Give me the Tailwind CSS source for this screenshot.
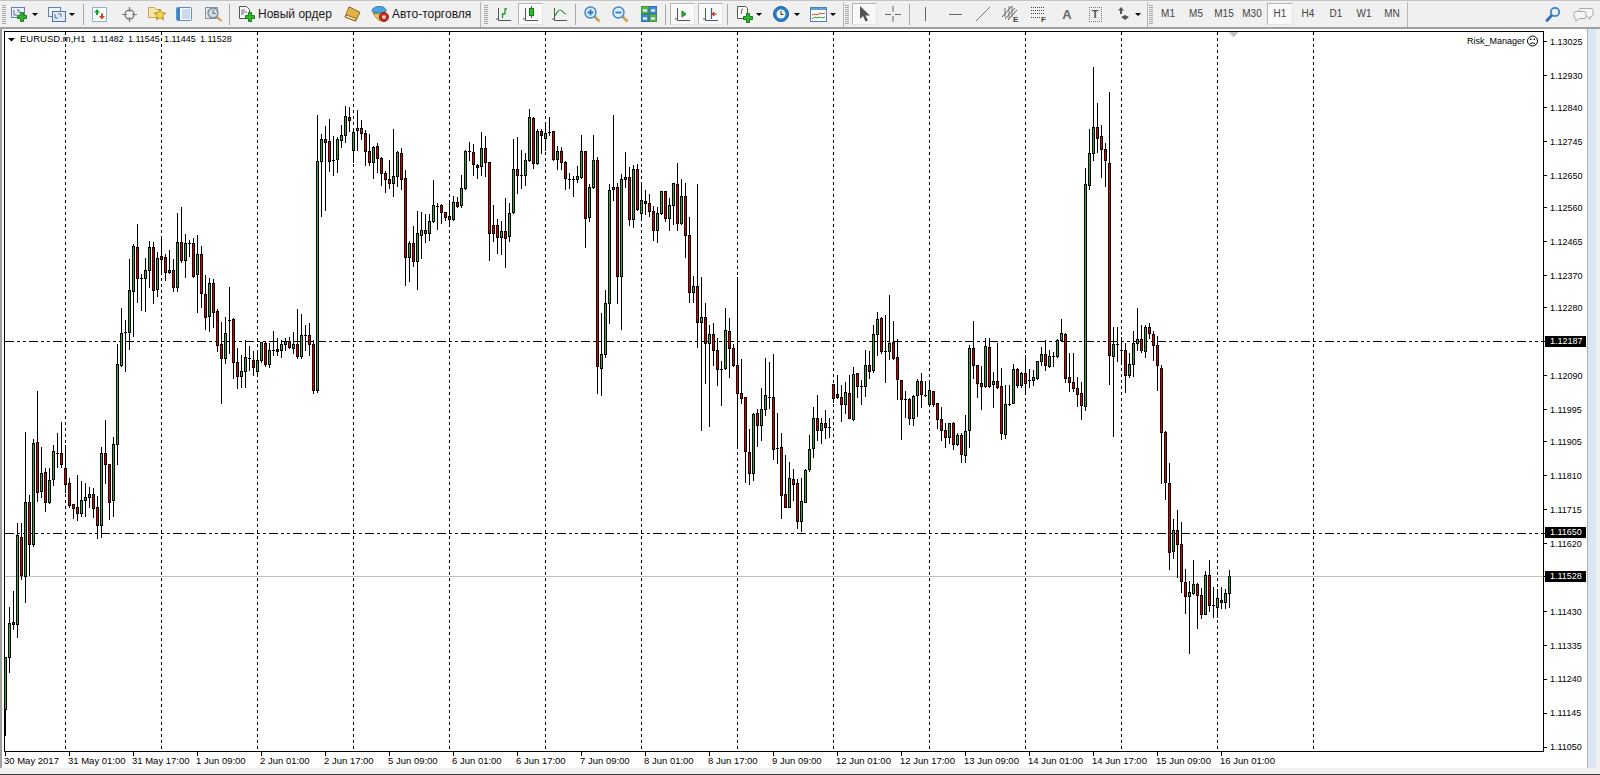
<!DOCTYPE html>
<html lang="ru">
<head>
<meta charset="utf-8">
<title>EURUSD.m,H1</title>
<script src="https://cdn.jsdelivr.net/npm/@tailwindcss/browser@4"></script>
</head>
<body class="w-[1600px] h-[775px] overflow-hidden bg-[#f0f0f0] font-['Liberation_Sans',sans-serif] text-black">

<header class="relative z-10 flex items-center w-[1600px] h-[28px] bg-[#f0f0f0] border-t border-t-[#c4c4c4] border-b border-b-[#a0a0a0] shadow-[0_1px_0_#a0a0a0]">
  <!-- group 1 -->
  <div class="flex-none w-[8px] h-full flex items-center justify-center"><div class="w-[4px] h-[20px] bg-[repeating-linear-gradient(0deg,#a8a8a8_0,#a8a8a8_1px,transparent_1px,transparent_2px)]"></div></div>
  <div class="flex-none w-[34px] h-full flex items-center pl-[3px] gap-[3px]">
    <svg width="18" height="15" viewBox="0 0 18 15"><rect x=".5" y=".5" width="13" height="10" fill="#e8f1fb" stroke="#5f83ad"/><path d="M3 3v5h3M6 3h2v3" stroke="#52708f" fill="none"/><path d="M9.500 5.500h3v3h3v3h-3v3h-3v-3h-3v-3h3z" fill="#2db52d" stroke="#1a7f1a"/></svg>
    <div class="w-0 h-0 border-x-[3px] border-x-transparent border-t-[3px] border-t-black"></div>
  </div>
  <div class="flex-none w-[36px] h-full flex items-center pl-[6px] gap-[3px]">
    <svg width="18" height="15" viewBox="0 0 18 15"><rect x=".5" y=".5" width="12" height="9" fill="#eef4fb" stroke="#5f83ad"/><rect x="4.500" y="4.500" width="13" height="10" fill="#dfeafa" stroke="#4a76aa"/><path d="M7 7v4h3M10 7h3v3" stroke="#52708f" fill="none"/></svg>
    <div class="w-0 h-0 border-x-[3px] border-x-transparent border-t-[3px] border-t-black"></div>
  </div>
  <div class="flex-none w-[5px]"></div>
  <div class="flex-none w-px h-[21px] bg-[#a8a8a8]"></div>
  <div class="flex-none w-[31px] h-full flex items-center justify-center">
    <svg width="15" height="15" viewBox="0 0 15 15"><rect x=".5" y=".5" width="14" height="14" fill="#fff" stroke="#8fb0d8"/><path d="M2 5.500l3-3.500 3 3.500H6V8H4V5.500z" fill="#22a022"/><path d="M7 9h2V6.500h2V9h2l-3 3.500z" fill="#d8431f"/></svg>
  </div>
  <div class="flex-none w-[29px] h-full flex items-center justify-center">
    <svg width="15" height="15" viewBox="0 0 15 15" fill="none" stroke="#7d7d7d"><circle cx="7.500" cy="7.500" r="4.500" stroke-width="1.400"/><path d="M7.500 0v5M7.500 10v5M0 7.500h5M10 7.500h5" stroke-width="1.200"/></svg>
  </div>
  <div class="flex-none w-[26px] h-full flex items-center justify-center">
    <svg width="18" height="16" viewBox="0 0 18 16"><path d="M.5 1.500h6l1.500 2h4v8H.5z" fill="#f7e6a8" stroke="#c2a658"/><path d="M12 3l1.700 3.700 4 .4-3 2.700.9 4-3.600-2.100L8.400 13.800l.9-4-3-2.700 4-.4z" fill="#f8d648" stroke="#a98a2a"/></svg>
  </div>
  <div class="flex-none w-[28px] h-full flex items-center justify-center">
    <svg width="16" height="14" viewBox="0 0 16 14"><rect x=".5" y=".5" width="15" height="13" rx="1" fill="#f4f8fd" stroke="#5f8fc6"/><rect x="1" y="1" width="3" height="12" fill="#3d82cc"/><path d="M6 3h8M6 5h8M6 7h8M6 9h8M6 11h8" stroke="#9dbbdd"/></svg>
  </div>
  <div class="flex-none w-[31px] h-full flex items-center justify-center">
    <svg width="18" height="16" viewBox="0 0 18 16"><rect x=".5" y="1.500" width="12" height="11" fill="#e3e8ee" stroke="#8a949e"/><circle cx="8" cy="7" r="5" fill="#cfdde9" stroke="#7a8794" stroke-width="1.300"/><path d="M8 4v3.500h2.500" stroke="#5f6a75" fill="none"/><path d="M12 11l4.500 4" stroke="#c8a14b" stroke-width="2.200"/></svg>
  </div>
  <div class="flex-none w-px h-[21px] bg-[#a8a8a8]"></div>
  <div class="flex-none w-[110px] h-full flex items-center pl-[9px] gap-[3px] text-[12px] leading-none text-[#1a1a1a]">
    <svg width="16" height="16" viewBox="0 0 16 16" class="flex-none"><path d="M.5.500h7l3 3v9H.5z" fill="#fff" stroke="#555"/><path d="M2 4h4M2 6h6M2 8h3" stroke="#666"/><path d="M9.500 6.500h3v3h3v3h-3v3h-3v-3h-3v-3h3z" fill="#2db52d" stroke="#1a7f1a"/></svg>
    <span class="whitespace-nowrap">Новый ордер</span>
  </div>
  <div class="flex-none w-[25px] h-full flex items-center justify-center">
    <svg width="17" height="16" viewBox="0 0 17 16"><path d="M5 .8l11 5.500-4.500 8.700L1 11z" fill="#e6b246" stroke="#8a6a22"/><path d="M1 11l10.500 4 .8-2.500L2.500 9z" fill="#f6e7bb" stroke="#8a6a22"/></svg>
  </div>
  <div class="flex-none w-[115px] h-full flex items-center pl-[6px] gap-[3px] text-[12px] leading-none text-[#1a1a1a]">
    <svg width="18" height="16" viewBox="0 0 18 16" class="flex-none"><path d="M2 7c2 4 5 7 8 8l5-6-7-1z" fill="#e9c25a" stroke="#a98a2a"/><path d="M1 5c0-3 4-4.500 7.500-4.500S15 2 15 5c0 1-3 2-7 2S1 6 1 5z" fill="#4da3dc" stroke="#2c77ad"/><circle cx="13" cy="11" r="4.500" fill="#d82a1c" stroke="#8f1a10"/><rect x="11.500" y="9.500" width="3" height="3" fill="#fff"/></svg>
    <span class="whitespace-nowrap">Авто-торговля</span>
  </div>
  <div class="flex-none w-px h-[25px] bg-[#b8b8b8]"></div>

  <!-- group 2 -->
  <div class="flex-none w-[10px] h-full flex items-center justify-center"><div class="w-[4px] h-[20px] bg-[repeating-linear-gradient(0deg,#a8a8a8_0,#a8a8a8_1px,transparent_1px,transparent_2px)]"></div></div>
  <div class="flex-none w-[25px] h-full flex items-center justify-center">
    <svg width="15" height="15" viewBox="0 0 15 15" fill="none"><path d="M2.500 1v12.500H15M0 12h3" stroke="#555"/><path d="M6.500 11V7H9M9 7V2h2" stroke="#1a961a" stroke-width="1.300"/></svg>
  </div>
  <div class="flex-none ml-[2px] w-[25px] h-[22px] flex items-center justify-center bg-[#f9f9f9] border border-t-[#b4b4b4] border-l-[#b4b4b4] border-r-[#e4e4e4] border-b-[#e4e4e4]">
    <svg width="15" height="16" viewBox="0 0 15 16" fill="none"><path d="M2.500 2v12.500H15M0 13h3" stroke="#555"/><path d="M8.500 0v12" stroke="#157a15"/><rect x="6.500" y="2.500" width="4" height="7" fill="#2dbb2d" stroke="#157a15"/></svg>
  </div>
  <div class="flex-none w-[32px] h-full flex items-center justify-center">
    <svg width="15" height="15" viewBox="0 0 15 15" fill="none"><path d="M2.500 1v12.500H15M0 12h3" stroke="#555"/><path d="M3 9c2-4 3-6 5-6s3 3 6 4" stroke="#1a961a" stroke-width="1.200"/></svg>
  </div>
  <div class="flex-none w-px h-[21px] bg-[#a8a8a8]"></div>
  <div class="flex-none w-[32px] h-full flex items-center justify-center">
    <svg width="17" height="17" viewBox="0 0 17 17" fill="none"><path d="M10.500 10.500l5 5" stroke="#c9a24d" stroke-width="2.600"/><circle cx="6.500" cy="6.500" r="5.500" fill="#d9ecfa" stroke="#3f86c6" stroke-width="1.400"/><path d="M6.500 3.500v6M3.500 6.500h6" stroke="#2b7cc4" stroke-width="1.800"/></svg>
  </div>
  <div class="flex-none w-[24px] h-full flex items-center justify-center">
    <svg width="17" height="17" viewBox="0 0 17 17" fill="none"><path d="M10.500 10.500l5 5" stroke="#c9a24d" stroke-width="2.600"/><circle cx="6.500" cy="6.500" r="5.500" fill="#d9ecfa" stroke="#3f86c6" stroke-width="1.400"/><path d="M3.500 6.500h6" stroke="#2b7cc4" stroke-width="1.800"/></svg>
  </div>
  <div class="flex-none w-[33px] h-full flex items-center justify-center">
    <svg width="16" height="16" viewBox="0 0 16 16"><rect width="16" height="16" fill="#fff"/><rect x=".5" y=".5" width="7" height="7" fill="#57b557" stroke="#3f9a3f"/><rect x="8.500" y=".5" width="7" height="7" fill="#3f8ad6" stroke="#2f72b8"/><rect x=".5" y="8.500" width="7" height="7" fill="#3f8ad6" stroke="#2f72b8"/><rect x="8.500" y="8.500" width="7" height="7" fill="#57b557" stroke="#3f9a3f"/><path d="M2 4.500h4M10 4.500h4M2 12.500h4M10 12.500h4" stroke="#fff" stroke-width="2"/></svg>
  </div>
  <div class="flex-none w-px h-[21px] bg-[#a8a8a8]"></div>
  <div class="flex-none ml-[4px] w-[25px] h-[22px] flex items-center justify-center bg-[#f9f9f9] border border-t-[#b4b4b4] border-l-[#b4b4b4] border-r-[#e4e4e4] border-b-[#e4e4e4]">
    <svg width="15" height="15" viewBox="0 0 15 15" fill="none"><path d="M2.500 1v12.500H15M0 12h3" stroke="#555"/><path d="M7 4l4 3-4 3z" fill="#31b531" stroke="#1a7f1a"/></svg>
  </div>
  <div class="flex-none ml-[3px] w-[25px] h-[22px] flex items-center justify-center bg-[#f9f9f9] border border-t-[#b4b4b4] border-l-[#b4b4b4] border-r-[#e4e4e4] border-b-[#e4e4e4]">
    <svg width="15" height="15" viewBox="0 0 15 15" fill="none"><path d="M2.500 1v12.500H15M0 12h3" stroke="#555"/><path d="M8.500 1v11" stroke="#2a5f9f" stroke-width="1.200"/><path d="M14 7H11V5L9 7l2 2V7" fill="#d8431f" stroke="#c83a18"/></svg>
  </div>
  <div class="flex-none ml-[4px] w-px h-[21px] bg-[#a8a8a8]"></div>
  <div class="flex-none w-[38px] h-full flex items-center pl-[9px] gap-[3px]">
    <svg width="16" height="17" viewBox="0 0 16 17" class="flex-none"><path d="M.5.500h8l2 2v10H.5z" fill="#fff" stroke="#555"/><path d="M6 3c-2 0-1 3-2 5" stroke="#555" fill="none"/><path d="M9.500 7.500h3v3h3v3h-3v3h-3v-3h-3v-3h3z" fill="#2db52d" stroke="#1a7f1a"/></svg>
    <div class="w-0 h-0 border-x-[3px] border-x-transparent border-t-[3px] border-t-black"></div>
  </div>
  <div class="flex-none w-[38px] h-full flex items-center pl-[7px] gap-[5px]">
    <svg width="16" height="16" viewBox="0 0 16 16" class="flex-none" fill="none"><circle cx="8" cy="8" r="7.500" fill="#2b7fc9" stroke="#1a5d99"/><circle cx="8" cy="8" r="4.500" fill="#f2f5f8"/><path d="M8 5v3.500h2.500" stroke="#333"/></svg>
    <div class="w-0 h-0 border-x-[3px] border-x-transparent border-t-[3px] border-t-black"></div>
  </div>
  <div class="flex-none w-[37px] h-full flex items-center pl-[6px] gap-[3px]">
    <svg width="17" height="15" viewBox="0 0 17 15" class="flex-none" fill="none"><rect x=".5" y=".5" width="16" height="14" fill="#fff" stroke="#4a7fb8"/><rect x="1" y="1" width="15" height="2" fill="#5f9bd8"/><path d="M2 8l3-1 2 1 3-2 2 1 3-1" stroke="#c8431f"/><path d="M2 12l3-2 2 1 3-1 2 1 3-1" stroke="#2ca02c"/></svg>
    <div class="w-0 h-0 border-x-[3px] border-x-transparent border-t-[3px] border-t-black"></div>
  </div>
  <div class="flex-none ml-[2px] w-px h-[25px] bg-[#b8b8b8]"></div>

  <!-- group 3 -->
  <div class="flex-none w-[6px] h-full flex items-center justify-center"><div class="w-[4px] h-[20px] bg-[repeating-linear-gradient(0deg,#a8a8a8_0,#a8a8a8_1px,transparent_1px,transparent_2px)]"></div></div>
  <div class="flex-none ml-[2px] w-[25px] h-[22px] flex items-center justify-center bg-[#f9f9f9] border border-t-[#b4b4b4] border-l-[#b4b4b4] border-r-[#e4e4e4] border-b-[#e4e4e4]">
    <svg width="11" height="16" viewBox="0 0 11 16"><path d="M1 0v13l3-3 2.500 5.500 2.500-1L6.500 9.500H11z" fill="#555"/></svg>
  </div>
  <div class="flex-none w-[32px] h-full flex items-center justify-center">
    <svg width="16" height="16" viewBox="0 0 16 16" stroke="#666"><path d="M8 0v6M8 10v6M0 8.500h6M10 8.500h6"/></svg>
  </div>
  <div class="flex-none w-px h-[21px] bg-[#a8a8a8]"></div>
  <div class="flex-none w-[31px] h-full flex items-center justify-center">
    <svg width="3" height="14" viewBox="0 0 3 14" stroke="#666"><path d="M1.500 0v14"/></svg>
  </div>
  <div class="flex-none w-[28px] h-full flex items-center justify-center">
    <svg width="13" height="3" viewBox="0 0 13 3" stroke="#666"><path d="M0 1.500h13"/></svg>
  </div>
  <div class="flex-none w-[27px] h-full flex items-center justify-center">
    <svg width="14" height="14" viewBox="0 0 14 14" stroke="#777"><path d="M0 14L14 0"/></svg>
  </div>
  <div class="flex-none w-[29px] h-full flex items-center justify-center">
    <svg width="17" height="18" viewBox="0 0 17 18" fill="none" stroke="#555"><path d="M0 12L10 1M3 14L13 3M6 15L15 5" /><path d="M3 3v9M7 1v12M10 1v11" stroke="#777"/><text x="11" y="17" font-size="8" font-weight="bold" fill="#444" stroke="none">E</text></svg>
  </div>
  <div class="flex-none w-[27px] h-full flex items-center justify-center">
    <svg width="16" height="17" viewBox="0 0 16 17" fill="none" stroke="#444" stroke-dasharray="1 1"><path d="M0 1.500h13M0 4.500h13M0 7.500h13M0 11.500h9"/><text x="10" y="16" font-size="8" font-weight="bold" fill="#444" stroke="none" stroke-dasharray="0">F</text></svg>
  </div>
  <div class="flex-none w-[30px] h-full flex items-center justify-center text-[13px] leading-none font-bold text-[#666]">A</div>
  <div class="flex-none w-[26px] h-full flex items-center justify-center">
    <div class="w-[13px] h-[15px] border border-dotted border-[#777] flex items-center justify-center text-[11px] leading-none font-bold text-[#555]">T</div>
  </div>
  <div class="flex-none w-[38px] h-full flex items-center pl-[9px] gap-[5px]">
    <svg width="13" height="15" viewBox="0 0 13 15" class="flex-none"><path d="M4 0l3 3.500H5V7H3V3.500H1z" fill="#555"/><path d="M1 9l4-2 4 2-4 3z" transform="translate(3 1)" fill="#555"/></svg>
    <div class="w-0 h-0 border-x-[3px] border-x-transparent border-t-[3px] border-t-black"></div>
  </div>
  <div class="flex-none ml-px w-px h-[25px] bg-[#b8b8b8]"></div>

  <!-- timeframes -->
  <div class="flex-none w-[6px] h-full flex items-center justify-center"><div class="w-[4px] h-[20px] bg-[repeating-linear-gradient(0deg,#a8a8a8_0,#a8a8a8_1px,transparent_1px,transparent_2px)]"></div></div>
  <div class="flex-none w-[28px] text-center text-[10px] leading-none text-[#444]">M1</div>
  <div class="flex-none w-[28px] text-center text-[10px] leading-none text-[#444]">M5</div>
  <div class="flex-none w-[28px] text-center text-[10px] leading-none text-[#444]">M15</div>
  <div class="flex-none w-[28px] text-center text-[10px] leading-none text-[#444]">M30</div>
  <div class="flex-none w-[28px] h-[22px] flex items-center justify-center px-px"><div class="w-[26px] h-[22px] flex items-center justify-center bg-[#f9f9f9] border border-t-[#b4b4b4] border-l-[#b4b4b4] border-r-[#e4e4e4] border-b-[#e4e4e4] text-[10px] leading-none text-[#444]">H1</div></div>
  <div class="flex-none w-[28px] text-center text-[10px] leading-none text-[#444]">H4</div>
  <div class="flex-none w-[28px] text-center text-[10px] leading-none text-[#444]">D1</div>
  <div class="flex-none w-[28px] text-center text-[10px] leading-none text-[#444]">W1</div>
  <div class="flex-none w-[28px] text-center text-[10px] leading-none text-[#444]">MN</div>
  <div class="flex-none ml-px w-px h-[25px] bg-[#b8b8b8]"></div>

  <div class="flex-1"></div>
  <div class="flex-none w-[30px] h-full flex items-center justify-center">
    <svg width="16" height="16" viewBox="0 0 16 16" fill="none"><path d="M7 9l-5 5.500" stroke="#2e6fc2" stroke-width="2.800" stroke-linecap="round"/><circle cx="10" cy="6" r="4.200" fill="#eaf3fc" stroke="#3a7fd0" stroke-width="1.800"/></svg>
  </div>
  <div class="flex-none w-[30px] h-full flex items-center justify-center mr-[2px]">
    <svg width="21" height="17" viewBox="0 0 21 17" fill="#f6f6f6" stroke="#a8a8a8"><path d="M8 2.500h10a2 2 0 012 2v4a2 2 0 01-2 2h-1v3l-3-3H8a2 2 0 01-2-2v-4a2 2 0 012-2z"/><path d="M3 5.500h8a2 2 0 012 2v3a2 2 0 01-2 2H6l-3 3v-3a2 2 0 01-2-2v-3a2 2 0 012-2z"/></svg>
  </div>
</header>

<main class="flex flex-col h-[747px]">
  <div class="flex h-[740px]">
    <div class="flex-none w-[2px] bg-[#a0a0a0]"></div>
    <section class="relative flex-none w-[1585px] h-[740px] bg-white overflow-hidden text-[9px] leading-[10px]">
      <svg id="chart" class="absolute left-0 top-0 block" width="1585" height="740" viewBox="2 28 1585 740" xmlns="http://www.w3.org/2000/svg">
        <g id="grid" shape-rendering="crispEdges"></g>
        <g id="bars" shape-rendering="crispEdges"></g>
        <rect x="4.500" y="31.500" width="1539" height="720" fill="none" stroke="#000" shape-rendering="crispEdges"/>
        <path d="M8 38h7l-3.500 3.500z" fill="#000"/>
        <path d="M1228.500 32h10l-5 5.500z" fill="#c4c4c4"/>
        <g fill="none" stroke="#000"><circle cx="1532.500" cy="41" r="5"/><path d="M1530 44c1.500-1.500 3.500-1.500 5 0"/></g>
        <rect x="1530" y="38.500" width="1.500" height="1.500" fill="#000"/><rect x="1533.500" y="38.500" width="1.500" height="1.500" fill="#000"/>
      </svg>

      <div class="absolute left-[18px] top-[6px] flex text-[9.500px] whitespace-nowrap">
        <span class="w-[72px]">EURUSD.m,H1</span>
        <span class="w-[36px] text-[9px]">1.11482</span>
        <span class="w-[36px] text-[9px]">1.11545</span>
        <span class="w-[36px] text-[9px]">1.11445</span>
        <span class="w-[36px] text-[9px]">1.11528</span>
      </div>
      <span class="absolute left-[1465px] top-[8px]">Risk_Manager</span>

      <!-- price axis -->
      <span class="absolute left-[1548px] top-[9px]">1.13025</span>
      <span class="absolute left-[1548px] top-[43px]">1.12930</span>
      <span class="absolute left-[1548px] top-[75px]">1.12840</span>
      <span class="absolute left-[1548px] top-[109px]">1.12745</span>
      <span class="absolute left-[1548px] top-[143px]">1.12650</span>
      <span class="absolute left-[1548px] top-[175px]">1.12560</span>
      <span class="absolute left-[1548px] top-[209px]">1.12465</span>
      <span class="absolute left-[1548px] top-[243px]">1.12370</span>
      <span class="absolute left-[1548px] top-[275px]">1.12280</span>
      <span class="absolute left-[1548px] top-[343px]">1.12090</span>
      <span class="absolute left-[1548px] top-[377px]">1.11995</span>
      <span class="absolute left-[1548px] top-[409px]">1.11905</span>
      <span class="absolute left-[1548px] top-[443px]">1.11810</span>
      <span class="absolute left-[1548px] top-[477px]">1.11715</span>
      <span class="absolute left-[1548px] top-[511px]">1.11620</span>
      <span class="absolute left-[1548px] top-[579px]">1.11430</span>
      <span class="absolute left-[1548px] top-[613px]">1.11335</span>
      <span class="absolute left-[1548px] top-[646px]">1.11240</span>
      <span class="absolute left-[1548px] top-[680px]">1.11145</span>
      <span class="absolute left-[1548px] top-[714px]">1.11050</span>
      <!-- price tags -->
      <span class="absolute left-[1543px] top-[308px] w-[41px] h-[11px] pl-[5px] bg-black text-white leading-[11px]">1.12187</span>
      <span class="absolute left-[1543px] top-[499px] w-[41px] h-[11px] pl-[5px] bg-black text-white leading-[11px]">1.11650</span>
      <span class="absolute left-[1543px] top-[543px] w-[41px] h-[11px] pl-[5px] bg-black text-white leading-[11px]">1.11528</span>

      <!-- time axis -->
      <div class="absolute left-[2px] top-[728px] flex text-[9.500px] whitespace-nowrap">
        <span class="flex-none w-[64px]">30 May 2017</span>
        <span class="flex-none w-[64px]">31 May 01:00</span>
        <span class="flex-none w-[64px]">31 May 17:00</span>
        <span class="flex-none w-[64px]">1 Jun 09:00</span>
        <span class="flex-none w-[64px]">2 Jun 01:00</span>
        <span class="flex-none w-[64px]">2 Jun 17:00</span>
        <span class="flex-none w-[64px]">5 Jun 09:00</span>
        <span class="flex-none w-[64px]">6 Jun 01:00</span>
        <span class="flex-none w-[64px]">6 Jun 17:00</span>
        <span class="flex-none w-[64px]">7 Jun 09:00</span>
        <span class="flex-none w-[64px]">8 Jun 01:00</span>
        <span class="flex-none w-[64px]">8 Jun 17:00</span>
        <span class="flex-none w-[64px]">9 Jun 09:00</span>
        <span class="flex-none w-[64px]">12 Jun 01:00</span>
        <span class="flex-none w-[64px]">12 Jun 17:00</span>
        <span class="flex-none w-[64px]">13 Jun 09:00</span>
        <span class="flex-none w-[64px]">14 Jun 01:00</span>
        <span class="flex-none w-[64px]">14 Jun 17:00</span>
        <span class="flex-none w-[64px]">15 Jun 09:00</span>
        <span class="flex-none w-[64px]">16 Jun 01:00</span>
      </div>
    </section>
    <div class="flex-none w-[13px] border-l border-l-[#b0b0b0] bg-[#dbe6f4] border-r-[4px] border-r-[#f0f0f0]"></div>
  </div>
  <div class="flex-1 border-b border-b-[#404040]"></div>
</main>

<script>
const S=[
[340,`950 950 1108 1185 g,800 848 950 995 g,752 847 853 868 r,548 586 853 890 g,548 590 704 716 r,276 487 707 785 g,465 487 613 704 r,296 310 613 618 g,153 307 455 482 r,322 400 452 470 g,385 397 485 513 r,385 421 487 490 g,316 334 418 434 g,279 338 338 382 g,246 338 371 380 r,316 385 433 455 r,415 430 496 500 r,493 493 503 533 r,406 502 520 539 r,424 481 520 527 g,430 472 479 527 g,442 463 472 500 g,445 463 503 530 r,469 502 556 593 r,322 340 556 590 g,240 340 373 430 r,373 373 487 536 r,292 313 481 527 g`],
[60,`853 913 1153 1211 g,744 820 915 918 g,780 816 816 933 g,598 691 815 867 g,552 559 694 827 g,492 562 655 725 r,642 655 655 750 g,595 631 655 752 g,544 562 631 680 g,546 562 691 728 r,577 595 688 708 g,538 589 596 640 r,583 592 637 660 r,571 631 637 640 g,598 631 682 692 r,459 547 682 692 g,441 547 599 607 r,522 550 601 650 g,540 550 550 588 g,535 550 648 650 r,525 583 643 755 g,558 583 700 740 r,645 703 770 806 r,655 670 767 812 g,657 670 755 800 r,748 754 856 872 r,785 853 895 1028 r,772 820 895 910 g,682 779 779 880 g,775 778 905 955 r,865 905 947 985 r,885 932 947 980 g,840 892 934 980 g,858 893 893 930 g,873 901 920 945 r,880 901 934 938 g,845 847 901 905 g,845 850 913 918 r,850 871 913 920 g,812 869 869 885 g,835 866 872 885 r,840 853 869 890 g,835 842 853 870 g,830 842 862 865 r,815 853 865 880 g,748 853 889 895 r,763 826 889 895 g,795 824 824 870 g,790 826 853 885 r,840 853 989 998 r,165 304 989 995 g,222 238 304 467 g,198 238 245 450 r,178 244 304 332 r,228 301 301 346 g,230 238 298 335 g,195 226 241 260 g,138 169 226 245 g,140 172 181 212 r,205 217 271 305 g,150 205 211 270 g,180 205 220 238 r,210 220 274 315 r,222 274 307 315 r,258 262 307 355 g,250 259 295 335 r,290 295 340 375 r,334 340 358 395 r,300 358 370 385 r,208 349 370 407 g,272 277 349 377 g`],
[90,`175 190 266 298 r,240 265 500 585 r,452 460 500 572 g,408 460 512 527 r,363 430 512 596 g,365 421 436 503 g,373 421 428 456 r,373 394 428 450 g,270 346 394 395 g,340 348 348 417 g,342 346 367 398 r,365 367 382 390 r,338 379 386 408 r,318 337 388 390 g,322 337 347 350 r,255 295 346 350 g,180 184 295 298 g,156 184 184 210 g,162 187 223 255 r,222 226 232 263 r,127 175 229 255 g,138 175 217 258 r,215 217 428 510 r,345 406 428 452 r,388 406 440 490 r,393 424 440 492 g,324 424 445 530 r,338 370 439 452 g,148 238 367 370 g,140 238 256 308 r,180 254 254 295 g,190 211 254 285 g,57 82 209 212 g,82 85 220 233 r,118 124 220 223 g,118 124 136 190 r,95 130 145 180 g,82 126 126 135 g,122 124 208 210 r,168 184 208 238 g,170 184 217 238 r,214 217 265 296 r,250 266 266 294 g,258 268 268 317 g,228 259 268 276 g,135 184 262 265 g,182 184 385 470 r,283 290 382 392 g,136 211 292 295 g,202 211 829 908 r,668 793 835 916 g,600 640 793 800 g,282 301 640 698 g,75 290 298 330 g,278 290 559 640 r,252 268 559 716 g,186 260 268 290 g,232 262 388 406 r,226 238 388 410 g,222 238 358 360 r,275 331 370 388 g,300 334 340 372 r,312 340 364 378 r,348 364 421 450 r,350 370 421 455 g,302 304 370 372 g,302 304 384 392 r,325 346 385 421 g,278 280 346 403 g,220 283 400 420 r,268 319 400 403 g,280 319 436 500 r,380 436 607 637 r,558 589 607 636 g,282 589 697 770 r`],
[270,`20 140 157 480 g,100 140 220 340 r,165 193 220 467 g,160 193 241 285 r,205 241 298 345 r,272 296 296 405 g,115 181 295 298 g,145 184 235 320 r,222 235 286 288 r,22 286 370 535 r,268 370 385 400 r,382 382 544 635 r,478 547 610 643 r,430 433 610 630 g,417 430 466 527 r,355 418 466 510 g,265 376 418 435 g,277 380 380 415 g,252 382 538 567 r,430 534 534 580 g,490 532 676 745 r,556 673 712 712 r,575 625 712 712 g,597 628 643 690 r,628 640 754 775 r,625 694 754 782 g,598 601 697 697 g,495 538 598 602 g,412 445 535 560 g,376 445 481 510 r,445 460 481 518 g,420 460 472 505 r,445 471 471 500 g,343 343 385 395 r,315 373 382 385 r,345 382 403 452 r,335 367 403 430 g,315 370 445 445 r,292 313 448 450 g,310 310 349 380 r,330 349 349 402 g,240 286 349 378 g,243 286 304 325 r,165 193 301 305 g,125 148 193 255 g,140 145 244 248 r,135 242 242 335 g,75 220 244 268 g,153 217 265 268 r,208 262 328 388 r,330 331 388 508 r,362 388 388 440 g,385 388 443 462 r,375 379 443 465 g,326 334 376 438 g,310 334 373 412 r,334 375 375 378 g,334 361 403 409 g,362 364 403 408 r,398 400 448 475 r,412 448 481 510 r,460 481 502 530 r,460 460 502 520 g,457 460 523 538 r,490 496 523 526 g,490 496 553 577 r,435 484 556 577 g,225 235 481 530 g,153 235 286 325 r,285 286 340 380 r,288 340 349 416 r,205 229 349 352 g,205 232 349 352 r,305 334 343 412 g,218 334 352 355 r,295 349 490 507 r,345 403 493 505 g,345 401 401 405 g,282 298 400 400 g,294 298 346 350 r,305 310 346 350 g,256 310 338 370 r,298 331 331 352 g,300 322 331 345 g,272 274 325 326 g,230 253 274 285 g,210 253 286 300 r,240 259 289 292 g,245 259 259 287 g,208 211 259 262 g,147 190 211 213 g,190 193 325 335 r,250 322 337 362 r,250 337 355 362 r,320 355 371 408 r,337 370 406 447 r`],
[50,`354 403 1067 1080 g,236 310 406 418 g,52 232 310 330 g,160 232 263 305 r,225 259 298 380 r,280 298 331 408 r,127 340 916 1002 r,830 883 919 1157 g,830 883 883 932 g,862 899 899 940 g,880 901 976 1025 r,908 943 976 980 g,843 880 943 978 g,775 866 880 900 g,825 866 901 905 r,825 832 904 920 g,820 832 850 865 r,842 853 886 930 r,858 886 946 1020 r,945 955 1146 1299 r`],
[390,`123 127 277 328 r,220 280 487 536 r,388 421 484 505 g,361 421 463 560 r,397 463 574 605 r,538 577 619 668 r,574 607 619 788 g,510 583 610 612 g,578 583 616 713 r,595 616 673 683 r,544 556 673 673 g,510 556 646 662 r,592 646 646 680 g,598 625 652 680 g,592 631 637 655 r,598 610 637 655 g,541 559 610 650 g`]
];
const G=[65,161,257,353,449,545,641,737,833,929,1025,1121,1217,1313];
const P=[41.6,75.6,107.7,141.7,175.6,207.8,241.7,275.7,307.8,341,375.7,409.7,441.8,475.8,509.7,533,543.6,576.5,611.5,645.5,679.4,713.4,747.3];
let g='';
G.forEach(x=>{g+=`<line x1="${x+.5}" x2="${x+.5}" y1="32" y2="749" stroke="#000" stroke-dasharray="3 3"/>`});
g+=`<line x1="5" x2="1543" y1="341.5" y2="341.5" stroke="#000" stroke-dasharray="9 3 3 3 3 3"/>`;
g+=`<line x1="5" x2="1543" y1="533.5" y2="533.5" stroke="#000" stroke-dasharray="9 3 3 3 3 3"/>`;
g+=`<line x1="5" x2="1543" y1="576.5" y2="576.5" stroke="#c0c0c0"/>`;
P.forEach(y=>{const r=Math.floor(y);g+=`<rect x="1544" y="${r}" width="3" height="1" fill="#000"/>`});
for(let k=0;k<20;k++){g+=`<rect x="${5+64*k}" y="752" width="1" height="4" fill="#000"/>`}
document.getElementById('grid').innerHTML=g;
let b='',i=0;
S.forEach(([y0,rows])=>{rows.split(',').forEach(row=>{
  const [h,t,bo,l,c]=row.split(' ');
  const Y=z=>Math.round(y0+(+z)/3),x=5+4*i;
  const yh=Y(h),yt=Y(t),yb=Y(bo),yl=Y(l);
  b+=`<rect x="${x}" y="${yh}" width="1" height="${yl-yh+1}" fill="#000"/>`;
  b+=`<rect x="${x-1}" y="${yt}" width="3" height="${yb-yt+1}" fill="#000"/>`;
  if(yb-yt>1)b+=`<rect x="${x}" y="${yt+1}" width="1" height="${yb-yt-1}" fill="${c==='g'?'#35a835':'#d80000'}"/>`;
  i++;
})});
document.getElementById('bars').innerHTML=b;
</script>
</body>
</html>
